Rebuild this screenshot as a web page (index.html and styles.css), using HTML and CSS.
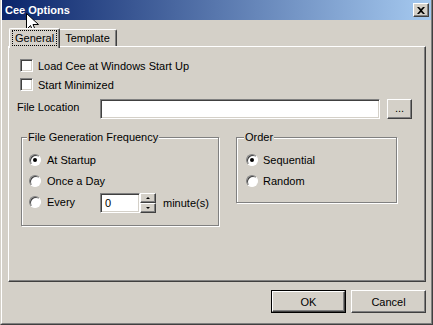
FILE: index.html
```html
<!DOCTYPE html>
<html lang="en">
<head>
  <meta charset="UTF-8">
  <title>Cee Options</title>
  <link rel="stylesheet" href="styles.css">
</head>
<body>

  <div class="window">
    <div class="frame">
      <div class="titlebar">
        <span class="title">Cee Options</span>
        <span class="close raised">
          <svg width="8" height="7" viewBox="0 0 8 7"><path d="M0 0h2l2 2 2-2h2L5 3.5 8 7H6L4 5 2 7H0l3-3.5z" fill="#000"/></svg>
        </span>
      </div>

      <div class="content">
        <div class="tabs">
          <div class="tab active"><span class="focus">General</span></div>
          <div class="tab">Template</div>
        </div>

        <div class="panel">
          <div class="check-row"><span class="checkbox"></span>Load Cee at Windows Start Up</div>
          <div class="check-row"><span class="checkbox"></span>Start Minimized</div>

          <div class="file-row">
            <span class="file-label">File Location</span>
            <span class="field file-field"></span>
            <span class="btn raised browse">...</span>
          </div>

          <div class="groups">
            <fieldset class="group freq">
              <legend>File Generation Frequency</legend>
              <div class="radio-row"><span class="radio on"></span>At Startup</div>
              <div class="radio-row"><span class="radio"></span>Once a Day</div>
              <div class="radio-row">
                <span class="radio"></span><span class="every">Every</span>
                <span class="spin">
                  <span class="field spin-field">0</span>
                  <span class="spin-btns">
                    <span class="spin-btn raised"><span class="arrow up"></span></span>
                    <span class="spin-btn raised"><span class="arrow down"></span></span>
                  </span>
                </span>
                <span class="unit">minute(s)</span>
              </div>
            </fieldset>

            <fieldset class="group order">
              <legend>Order</legend>
              <div class="radio-row"><span class="radio on"></span>Sequential</div>
              <div class="radio-row"><span class="radio"></span>Random</div>
            </fieldset>
          </div>
        </div>

        <div class="buttons">
          <span class="btn default"><span class="raised inner">OK</span></span>
          <span class="btn raised">Cancel</span>
        </div>
      </div>
    </div>

    <!-- mouse pointer over the title -->
    <svg class="cursor" width="13" height="21" viewBox="0 0 13 21">
      <path d="M0.5 0.5v16l4-4 3 7 2.5-1-3-7h5.5z" fill="#fff" stroke="#000" stroke-width="1"/>
    </svg>
  </div>

</body>
</html>
```

FILE: styles.css
```css
body { margin: 0; background: #d4d0c8; font-family: "Liberation Sans", Arial, sans-serif; font-size: 11px; color: #000; }

.window { position: relative; width: 433px; height: 325px; box-sizing: border-box; border-style: solid; border-width: 0 1px 1px 1px; border-color: #d4d0c8 #404040 #404040 #d4d0c8; overflow: hidden; }
.frame { height: 100%; box-sizing: border-box; border-style: solid; border-width: 0 1px 1px 1px; border-color: #fff #808080 #808080 #fff; display: flex; flex-direction: column; }

.titlebar { height: 20px; display: flex; align-items: center; justify-content: space-between; padding: 0 2px 0 3px; background: linear-gradient(to right, #0a246a, #a6caf0); }
.title { color: #fff; font-weight: bold; font-size: 11px; }
.close { width: 16px; height: 14px; box-sizing: border-box; display: flex; align-items: center; justify-content: center; background: #d4d0c8; }

.raised { border: 1px solid; border-color: #fff #404040 #404040 #fff; box-shadow: inset -1px -1px #808080; }
.field { background: #fff; border: 1px solid; border-color: #808080 #fff #fff #808080; box-shadow: inset 1px 1px #404040, inset -1px -1px #d4d0c8; box-sizing: border-box; }

.content { flex: 1; padding: 7px 5px 0 6px; display: flex; flex-direction: column; }

.tabs { display: flex; align-items: flex-end; padding-left: 1px; height: 19px; }
.tab { height: 16px; padding: 0 6px; display: flex; align-items: center; border-top: 1px solid #fff; border-left: 1px solid #fff; border-right: 1px solid #404040; box-shadow: inset -1px 0 #808080; border-radius: 2px 2px 0 0; }
.tab.active { height: 19px; margin-bottom: -2px; margin-right: -2px; padding: 0 3px; position: relative; z-index: 1; background: #d4d0c8; align-items: flex-start; }
.focus { outline: 1px dotted #000; padding: 1px 2px; margin-top: 2px; line-height: 12px; }

.panel { height: 236px; box-sizing: border-box; border: 1px solid; border-color: #fff #404040 #404040 #fff; box-shadow: inset -1px -1px #808080; padding: 9px 0 0 11px; }

.check-row { display: flex; align-items: center; height: 19px; }
.checkbox { width: 13px; height: 13px; box-sizing: border-box; margin-right: 5px; background: #fff; border: 1px solid; border-color: #808080 #fff #fff #808080; box-shadow: inset 1px 1px #404040, inset -1px -1px #d4d0c8; }

.file-row { display: flex; align-items: flex-start; margin: 5px 0 0 -3px; }
.file-label { width: 83px; flex-shrink: 0; margin-top: 2px; }
.file-field { width: 280px; height: 20px; flex-shrink: 0; }
.btn.browse { width: 25px; height: 20px; flex-shrink: 0; margin-left: 7px; padding-bottom: 2px; }

.groups { display: flex; align-items: flex-start; gap: 17px; margin-top: 12px; margin-left: 1px; }
.group { margin: 0; padding: 5px 0 0 7px; border: 1px solid #808080; box-shadow: 1px 1px #fff, inset 1px 1px #fff; box-sizing: border-box; }
.group legend { padding: 0 1px; margin-left: -2px; background: #d4d0c8; line-height: 13px; }
.freq { width: 198px; height: 95px; }
.order { width: 161px; height: 72px; padding-left: 9px; }

.radio-row { display: flex; align-items: center; height: 21px; }
.radio { width: 12px; height: 12px; box-sizing: border-box; margin-right: 6px; border-radius: 50%; background: #fff; border: 1px solid; border-color: #808080 #fff #fff #808080; box-shadow: inset 1px 1px #404040; display: flex; align-items: center; justify-content: center; }
.radio.on::after { content: ""; width: 4px; height: 4px; border-radius: 50%; background: #000; }
.order .radio { margin-right: 5px; }

.every { width: 53px; }
.spin { display: flex; margin-top: 3px; }
.spin-field { width: 40px; height: 20px; padding: 3px 0 0 4px; }
.spin-btns { display: flex; flex-direction: column; }
.spin-btn { width: 16px; height: 10px; box-sizing: border-box; display: flex; align-items: center; justify-content: center; background: #d4d0c8; }
.arrow { width: 0; height: 0; border-left: 2px solid transparent; border-right: 2px solid transparent; }
.arrow.up { border-bottom: 2px solid #000; }
.arrow.down { border-top: 2px solid #000; }
.unit { margin-left: 7px; margin-top: 3px; }

.buttons { display: flex; justify-content: flex-end; gap: 5px; margin-top: 8px; }
.btn { width: 75px; height: 23px; box-sizing: border-box; display: flex; align-items: center; justify-content: center; background: #d4d0c8; }
.btn.default { border: 1px solid #000; }
.btn.default .inner { width: 100%; height: 100%; box-sizing: border-box; display: flex; align-items: center; justify-content: center; }

.cursor { position: absolute; left: 25px; top: 13px; }
```
